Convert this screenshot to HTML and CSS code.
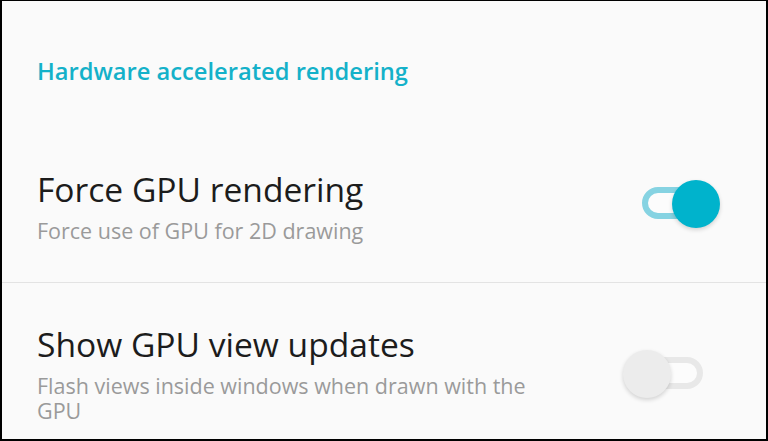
FILE: index.html
```html
<!DOCTYPE html>
<html lang="en">
<head>
    <meta charset="UTF-8">
    <title>Hardware accelerated rendering</title>
    <link rel="stylesheet" href="styles.css">
</head>
<body>
    <div class="frame">
        <div class="category">Hardware accelerated rendering</div>

        <div class="pref first">
            <div class="pref-text">
                <div class="pref-title">Force GPU rendering</div>
                <div class="pref-summary">Force use of GPU for 2D drawing</div>
            </div>
            <div class="switch on">
                <span class="track"></span>
                <span class="thumb"></span>
            </div>
        </div>

        <div class="pref second">
            <div class="pref-text">
                <div class="pref-title">Show GPU view updates</div>
                <div class="pref-summary">Flash views inside windows when drawn with the GPU</div>
            </div>
            <div class="switch">
                <span class="track"></span>
                <span class="thumb"></span>
            </div>
        </div>
    </div>
</body>
</html>
```

FILE: styles.css
```css
body {
    margin: 0;
    font-family: "Open Sans", "Noto Sans", sans-serif;
    background-color: #000;
}
.frame {
    height: 438px;
    background-color: #fafafa;
    border-top: 1px solid #000;
    border-bottom: 2px solid #000;
    border-left: 2px solid #000;
    border-right: 2px solid #000;
    overflow: hidden;
}
.category {
    padding: 54px 0 0 35px;
    height: 66px;
    color: #14b1c9;
    font-size: 23.7px;
    font-weight: 600;
}
.pref {
    display: flex;
    align-items: flex-start;
    box-sizing: border-box;
    padding: 0 46px 0 35px;
}
.pref.first {
    height: 162px;
    padding-top: 48px;
    border-bottom: 1px solid #e3e3e3;
}
.pref.second {
    height: 156px;
    padding-top: 41px;
}
.pref-text {
    max-width: 520px;
}
.pref-title {
    font-size: 33.6px;
    color: #1c1c1c;
    line-height: 40px;
}
.pref-summary {
    margin-top: 9px;
    font-size: 21.5px;
    line-height: 25px;
    color: #9a9a9a;
}
.switch {
    position: relative;
    margin-left: auto;
    width: 97px;
    height: 48px;
    flex-shrink: 0;
}
.pref.first .switch {
    margin-top: 11px;
}
.pref.second .switch {
    margin-top: 26px;
}
.switch .track {
    position: absolute;
    left: 19px;
    top: 7px;
    width: 49px;
    height: 20px;
    border: 6px solid #e8e8e8;
    border-radius: 16px;
    background-color: #fcfcfc;
}
.switch .thumb {
    position: absolute;
    left: 0;
    top: 0;
    width: 48px;
    height: 48px;
    border-radius: 50%;
    background-color: #ececec;
    box-shadow: 0 2px 4px rgba(0, 0, 0, 0.16);
}
.switch.on .track {
    border-color: #86d3e2;
}
.switch.on .thumb {
    left: 49px;
    background-color: #00b3cc;
}
```
